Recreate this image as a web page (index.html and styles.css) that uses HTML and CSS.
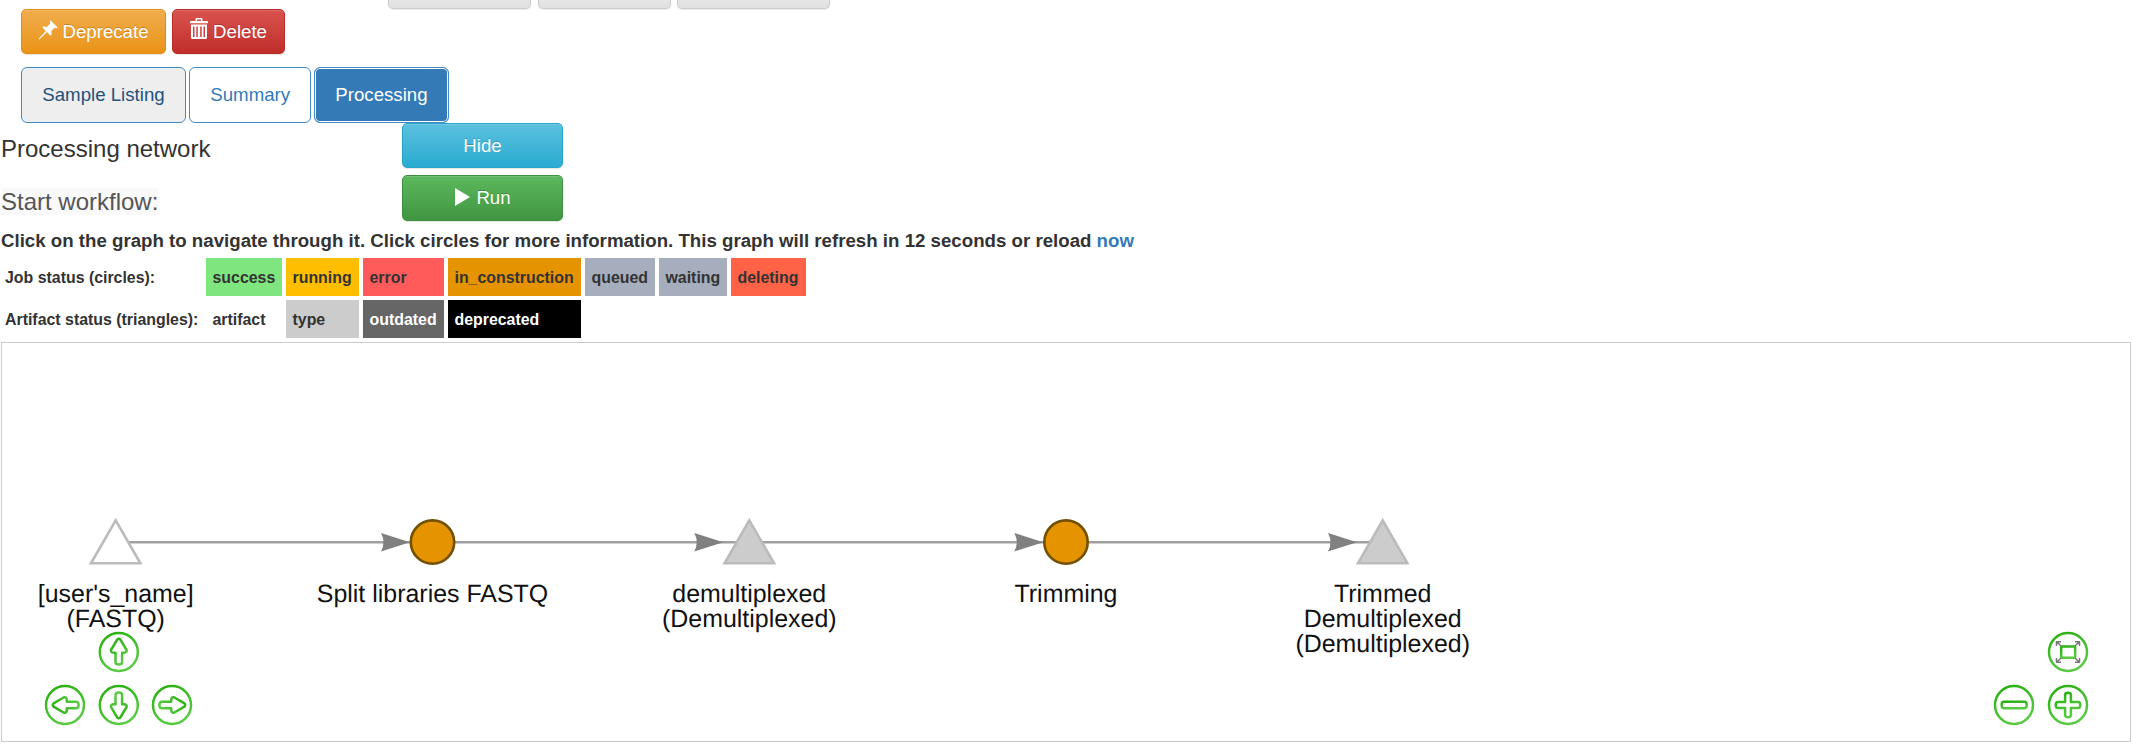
FILE: index.html
```html
<!DOCTYPE html>
<html lang="en">
<head>
<meta charset="utf-8">
<title>Processing network</title>
<link rel="stylesheet" href="styles.css">
</head>
<body>
<div class="upper-row">
  <span class="stub stub-a"></span><span class="stub stub-b"></span><span class="stub stub-c"></span>
</div>
<div class="actions">
  <button class="btn btn-warning">
    <svg class="ico ico-pin" viewBox="0 0 20 20"><path d="M12.4 0.3 19.7 7.6 18.2 8.2 16.4 7.8 13.2 11.2 13.7 14.6 12.6 15.7 9 12.1 1.8 18.9 0.4 19.6 1.1 18.2 7.8 10.9 4.4 7.5 5.6 6.3 8.9 6.9 12.2 3.6 11.8 1.8Z"/></svg>
    Deprecate
  </button>
  <button class="btn btn-danger">
    <svg class="ico ico-trash" viewBox="0 0 18 21"><path fill-rule="evenodd" d="M5.5 3V1.2Q5.5 0 6.7 0H11.3Q12.5 0 12.5 1.2V3H17Q18 3 18 4V5.2H0V4Q0 3 1 3ZM7 3H11V1.4H7ZM1 6.5H17V19.5Q17 21 15.5 21H2.5Q1 21 1 19.5ZM3 8.5V19H4.5V8.5ZM6.3 8.5V19H7.8V8.5ZM10.2 8.5V19H11.7V8.5ZM13.5 8.5V19H15V8.5Z"/></svg>
    Delete
  </button>
</div>
<nav class="tabs">
  <a class="tab hovered">Sample Listing</a>
  <a class="tab">Summary</a>
  <a class="tab active">Processing</a>
</nav>
<section class="controls">
  <div class="control-row">
    <span class="control-label">Processing network</span>
    <button class="btn btn-info wide">Hide</button>
  </div>
  <div class="control-row">
    <span class="control-label"><span class="muted">Start workflow:</span></span>
    <button class="btn btn-success wide"><svg class="ico ico-play" viewBox="0 0 15 18"><path d="M0 0 15 9 0 18Z"/></svg>Run</button>
  </div>
</section>
<p class="hint">Click on the graph to navigate through it. Click circles for more information. This graph will refresh in <span>12</span> seconds or reload <a class="link">now</a></p>
<div class="legend">
  <span class="legend-label">Job status (circles):</span>
  <span class="cell success">success</span>
  <span class="cell running">running</span>
  <span class="cell error">error</span>
  <span class="cell construction">in_construction</span>
  <span class="cell idle">queued</span>
  <span class="cell idle">waiting</span>
  <span class="cell deleting">deleting</span>
  <span class="legend-label">Artifact status (triangles):</span>
  <span class="cell">artifact</span>
  <span class="cell type">type</span>
  <span class="cell outdated">outdated</span>
  <span class="cell deprecated">deprecated</span>
</div>
<div class="graph">
  <svg class="network" viewBox="2 343 2128 398">
    <defs>
      <linearGradient id="green" x1="0" y1="0" x2="0.4" y2="1">
        <stop offset="0" stop-color="#25ae0c"/><stop offset="1" stop-color="#58cb43"/>
      </linearGradient>
      <path id="arrowhead" d="M0-9.3 29 0 0 9.3Q5 0 0-9.3Z"/>
      <path id="triangle" d="M0-21.7 24.7 21.3H-24.7Z"/>
      <path id="nav-arrow" d="M-1.6-12.4Q0-14 1.6-12.4L7.8-2Q8.2.6 5.2.8H3.3V10Q3.3 12.6 0 12.6T-3.3 10V.8H-5.2Q-8.2.6-7.8-2Z"/>
    </defs>
    <g class="edges">
      <path d="M115.7 542.2H432.5M432.5 542.2H749.3M749.3 542.2H1066M1066 542.2H1382.7"/>
    </g>
    <g class="heads">
      <use href="#arrowhead" x="381" y="542.2"/>
      <use href="#arrowhead" x="694.3" y="542.2"/>
      <use href="#arrowhead" x="1014.3" y="542.2"/>
      <use href="#arrowhead" x="1328" y="542.2"/>
    </g>
    <use class="artifact" href="#triangle" x="115.7" y="542"/>
    <circle class="job" cx="432.5" cy="542.1" r="21.7"/>
    <use class="artifact typed" href="#triangle" x="749.3" y="542"/>
    <circle class="job" cx="1066" cy="542.1" r="21.7"/>
    <use class="artifact typed" href="#triangle" x="1382.7" y="542"/>
    <g class="labels">
      <text x="115.7" y="601.9">[user's_name]</text>
      <text x="115.7" y="626.9">(FASTQ)</text>
      <text x="432.5" y="601.9">Split libraries FASTQ</text>
      <text x="749.3" y="601.9">demultiplexed</text>
      <text x="749.3" y="626.9">(Demultiplexed)</text>
      <text x="1066" y="601.9">Trimming</text>
      <text x="1382.7" y="601.9">Trimmed</text>
      <text x="1382.7" y="626.9">Demultiplexed</text>
      <text x="1382.7" y="651.9">(Demultiplexed)</text>
    </g>
    <g class="nav">
      <g transform="translate(118.8 652)"><circle r="19"/><use href="#nav-arrow"/></g>
      <g transform="translate(65 705)"><circle r="19"/><use href="#nav-arrow" transform="translate(1 0) rotate(-90)"/></g>
      <g transform="translate(118.8 705)"><circle r="19"/><use href="#nav-arrow" transform="rotate(180)"/></g>
      <g transform="translate(172 705)"><circle r="19"/><use href="#nav-arrow" transform="rotate(90)"/></g>
      <g transform="translate(2068 652)">
        <circle r="19"/><rect x="-6.8" y="-5.6" width="14" height="11.4" rx="1"/>
        <path class="corners" d="M-7-6-11-10M-11.5-6V-10.3H-7M7-6 11-10M7-10.3H11.5V-6M-7 6-11 10M-11.5 6V10.3H-7M7 6 11 10M7 10.3H11.5V6"/>
      </g>
      <g transform="translate(2014 705)"><circle r="19"/><rect x="-12.3" y="-3.2" width="25" height="6.4" rx="2.4"/></g>
      <g transform="translate(2068 705)"><circle r="19"/><path d="M-2.9-3V-10Q-2.9-12.2 0-12.2T2.9-10V-3H10Q12.3-3 12.3 0T10 3H2.9V10Q2.9 12.2 0 12.2T-2.9 10V3H-10Q-12.3 3-12.3 0T-10-3Z"/></g>
    </g>
  </svg>
</div>
</body>
</html>
```

FILE: styles.css
```css
* { box-sizing: border-box; }
body {
  margin: 0;
  width: 2151px;
  height: 756px;
  overflow: hidden;
  background: #fff;
  color: #333;
  font: 18.667px/26.667px "Liberation Sans", Arial, sans-serif;
}
.upper-row { display: flex; height: 9px; padding-left: 388px; }
.stub {
  height: 9px;
  border: 1px solid #ccc;
  border-top: 0;
  border-radius: 0 0 5px 5px;
  background: linear-gradient(#e6e6e6, #e0e0e0);
  box-shadow: 0 1px 1px rgba(0, 0, 0, .08);
}
.stub-a { width: 143px; margin-right: 7px; }
.stub-b { width: 133px; margin-right: 6px; }
.stub-c { width: 153px; }
.actions { display: flex; gap: 6px; padding-left: 21px; height: 45px; }
.btn {
  display: flex;
  align-items: center;
  justify-content: center;
  height: 45px;
  padding: 1px 16px 0;
  border: 1px solid;
  border-radius: 5px;
  color: #fff;
  font: inherit;
  text-shadow: 0 -1px 0 rgba(0, 0, 0, .2);
  box-shadow: inset 0 1px 0 rgba(255, 255, 255, .15), 0 1px 1px rgba(0, 0, 0, .1);
}
.btn-warning { width: 145px; background: linear-gradient(#f0ad4e, #eb9316); border-color: #e38d13; }
.btn-danger { width: 113px; background: linear-gradient(#d9534f, #c12e2a); border-color: #b92c28; }
.btn-info { background: linear-gradient(#5bc0de, #2aabd2); border-color: #28a4c9; }
.btn-success { background: linear-gradient(#5cb85c, #419641); border-color: #3e8f3e; }
.wide { width: 161px; }
.control-row + .control-row .btn { height: 46px; padding-top: 0; }
.ico { flex: none; fill: #fff; }
.ico-pin { width: 20px; height: 20px; margin: -5px 4px 0 0; }
.ico-trash { width: 18px; height: 21px; margin: -7px 5px 0 0; }
.ico-play { width: 15px; height: 18px; margin: -3px 6px 0 1px; }
.tabs { display: flex; gap: 3px; margin-top: 13px; padding-left: 21px; }
.tab {
  height: 56px;
  padding: 14px 20.3px;
  border: 1px solid #428bca;
  border-radius: 6px;
  color: #337ab7;
}
.tab.hovered { width: 165px; background: #eee; color: #23527c; }
.tab:nth-child(2) { width: 122px; }
.tab.active { width: 135px; background: #337ab7; color: #fff; box-shadow: inset 0 0 0 1px #fff; }
.controls { display: flex; flex-direction: column; gap: 7px; }
.control-row { display: flex; height: 45px; }
.control-label { width: 402px; padding: 12px 0 0 1px; font-size: 24px; line-height: 27px; }
.control-row + .control-row .control-label { padding-top: 13px; }
.muted { display: inline-block; background: #f9f9f9; color: #555; }
.hint { margin: 8px 0 0 1px; font-weight: bold; white-space: nowrap; letter-spacing: 0.007px; }
.legend {
  display: grid;
  grid-template-columns: 197px 76px 73px 81px 133px 70px 68px 75px;
  grid-auto-rows: 38px;
  gap: 4px;
  margin-top: 3px;
  padding-left: 5px;
  font-size: 15.9px;
  line-height: 40px;
  font-weight: bold;
}
.legend-label { white-space: nowrap; }
.cell { height: 38px; padding-left: 6.5px; }
.success { background: #7fe57f; }
.running { background: #ffbf00; }
.error { background: #ff5b5b; }
.construction { background: #e59400; }
.idle { background: #a6adbc; }
.deleting { background: #ff6347; }
.type { background: #ccc; }
.outdated { background: #666; color: #fff; }
.deprecated { background: #000; color: #fff; }
.legend-label:nth-of-type(9) { grid-column: 1; }
.link { color: #337ab7; }
.graph { width: 2130px; height: 400px; margin: 4px 0 0 1px; border: 1px solid #ccc; }
.network { display: block; width: 2128px; height: 398px; }
.edges { fill: none; stroke: #a0a0a0; stroke-width: 2.4; }
.heads { fill: #808080; }
.artifact { fill: #fff; stroke: #bbb; stroke-width: 2.6; }
.typed { fill: #ccc; }
.job { fill: #e59400; stroke: #725000; stroke-width: 2.6; }
.labels { fill: #111; font-size: 24.95px; text-anchor: middle; text-rendering: geometricPrecision; }
.nav { fill: #fff; stroke: url(#green); stroke-width: 2.5; stroke-linejoin: round; }
.nav .corners { fill: none; stroke: #777; stroke-width: 1.5; }
```
